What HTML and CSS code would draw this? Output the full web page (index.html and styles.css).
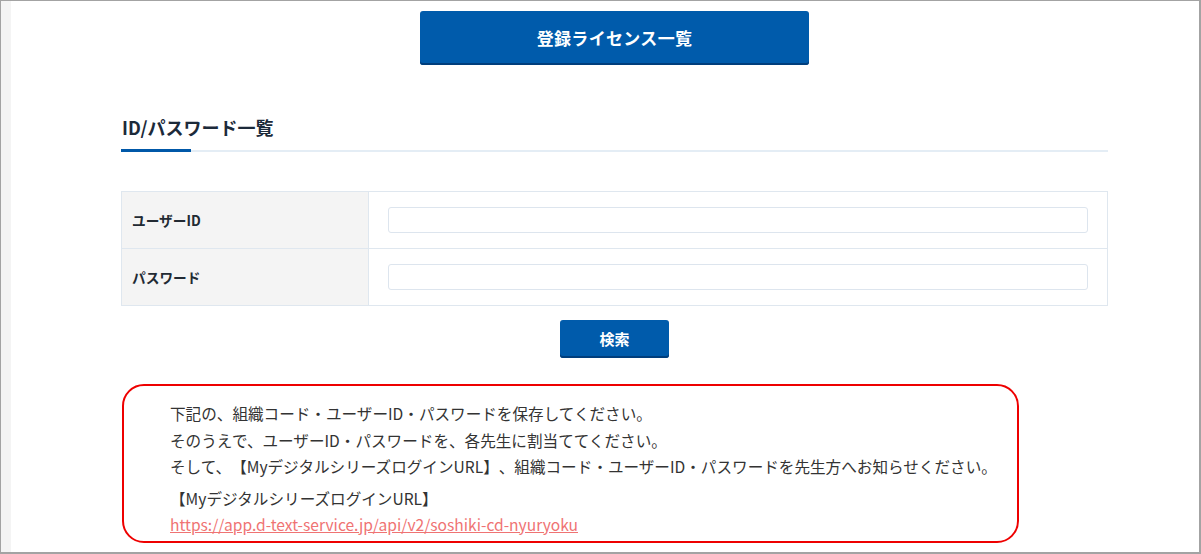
FILE: index.html
```html
<!DOCTYPE html>
<html lang="ja">
<head>
<meta charset="utf-8">
<title>ID/パスワード一覧</title>
<link rel="stylesheet" href="styles.css">
</head>
<body>
<div class="frame">
  <div class="side"></div>
  <main class="main">
    <div class="content">
      <div class="top-action">
        <button class="btn-primary" type="button">登録ライセンス一覧</button>
      </div>

      <section class="section">
        <h2 class="section-title">ID/パスワード一覧</h2>
        <div class="title-line"><span class="title-line-accent"></span><span class="title-line-rest"></span></div>
      </section>

      <div class="search-table">
        <div class="row">
          <div class="label">ユーザーID</div>
          <div class="field"><input class="text-input" type="text"></div>
        </div>
        <div class="row">
          <div class="label">パスワード</div>
          <div class="field"><input class="text-input" type="text"></div>
        </div>
      </div>

      <div class="search-action">
        <button class="btn-search" type="button">検索</button>
      </div>

      <div class="notice">
        <p class="notice-p">下記の、組織コード・ユーザーID・パスワードを保存してください。<br>そのうえで、ユーザーID・パスワードを、各先生に割当ててください。<br>そして、【MyデジタルシリーズログインURL】、組織コード・ユーザーID・パスワードを先生方へお知らせください。</p>
        <p class="notice-p notice-url">【MyデジタルシリーズログインURL】<br><a class="notice-link" href="#">https://app.d-text-service.jp/api/v2/soshiki-cd-nyuryoku</a></p>
      </div>
    </div>
  </main>
</div>
</body>
</html>
```

FILE: styles.css
```css
* { box-sizing: border-box; }

html, body {
  margin: 0;
  padding: 0;
  background: #ffffff;
}

body {
  font-family: "Noto Sans CJK JP", "Noto Sans", sans-serif;
  color: #333333;
  text-spacing-trim: space-all;
}

.frame {
  display: flex;
  width: 1201px;
  height: 554px;
  border-top: 1px solid #a3a3a3;
  border-left: 1px solid #a3a3a3;
  border-right: 2px solid #a3a3a3;
  border-bottom: 2px solid #a3a3a3;
  overflow: hidden;
}

.side {
  width: 10px;
  flex: 0 0 10px;
  background: #f4f4f4;
}

.main {
  flex: 1;
  padding-top: 10px;
}

.content {
  width: 987px;
  margin-left: 110px;
}

.top-action {
  display: flex;
  justify-content: center;
}

.btn-primary {
  width: 389px;
  height: 54px;
  border: 0;
  border-radius: 3px;
  background: #005bab;
  box-shadow: inset 0 -2px 0 #003e7c;
  color: #ffffff;
  font-family: inherit;
  font-size: 17px;
  font-weight: 700;
  letter-spacing: 0.02em;
  padding: 0 0 2px;
}

.section {
  margin-top: 49px;
}

.section-title {
  margin: 0 0 0 1px;
  font-size: 18px;
  line-height: 26px;
  font-weight: 700;
  color: #1c2a3a;
}

.title-line {
  display: flex;
  align-items: flex-end;
  margin-top: 9px;
  height: 3px;
}

.title-line-accent {
  width: 70px;
  height: 3px;
  background: #0058a8;
}

.title-line-rest {
  flex: 1;
  height: 2px;
  background: #e4edf5;
}

.search-table {
  margin-top: 39px;
  border: 1px solid #dfe7ef;
}

.row {
  display: flex;
  height: 57px;
}

.row + .row {
  border-top: 1px solid #dfe7ef;
  height: 57px;
}

.row:first-child {
  height: 56px;
}

.label {
  width: 247px;
  flex: 0 0 247px;
  background: #f4f4f4;
  border-right: 1px solid #dfe7ef;
  display: flex;
  align-items: center;
  padding-left: 10px;
  font-size: 13.7px;
  font-weight: 700;
  color: #222a33;
}

.field {
  flex: 1;
  display: flex;
  align-items: center;
  padding: 0 19px 0 19px;
}

.text-input {
  width: 100%;
  height: 26px;
  border: 1px solid #dde5ee;
  border-radius: 3px;
  background: #ffffff;
  outline: none;
}

.search-action {
  display: flex;
  justify-content: center;
  margin-top: 14px;
}

.btn-search {
  width: 109px;
  height: 38px;
  border: 0;
  border-radius: 3px;
  background: #005bab;
  box-shadow: inset 0 -2px 0 #003e7c;
  color: #ffffff;
  font-family: inherit;
  font-size: 15px;
  font-weight: 700;
  padding: 0 0 2px;
}

.notice {
  width: 897px;
  margin: 26px 0 0 1px;
  border: 2px solid #ee0000;
  border-radius: 22px;
  padding: 14px 20px 3px 46px;
}

.notice-p {
  margin: 0;
  font-size: 15.6px;
  line-height: 26.5px;
  color: #333333;
}

.notice-url {
  margin-top: 5px;
}

.notice-link {
  color: #ef7373;
  text-decoration: underline;
}
```
